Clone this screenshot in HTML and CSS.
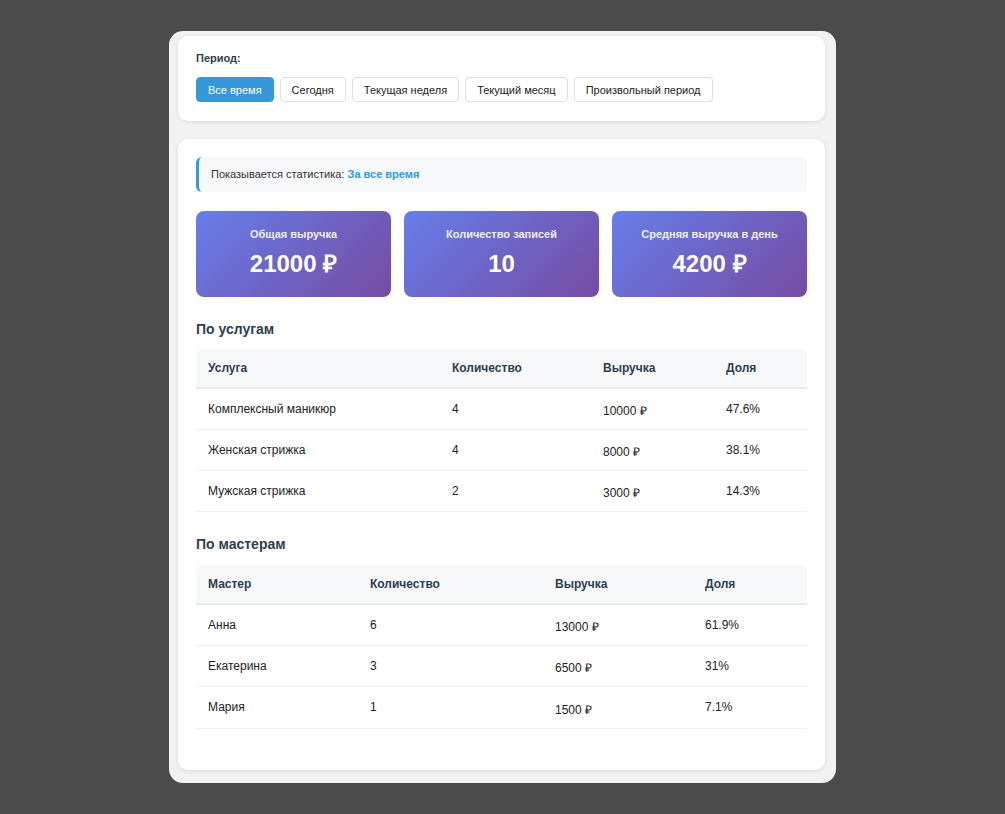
FILE: index.html
```html
<!DOCTYPE html>
<html lang="ru">
<head>
<meta charset="utf-8">
<title>Статистика</title>
<link rel="stylesheet" href="styles.css">
</head>
<body>
<div class="frame">
  <section class="card period-card">
    <div class="period-label">Период:</div>
    <div class="period-buttons">
      <button class="pbtn active">Все время</button>
      <button class="pbtn">Сегодня</button>
      <button class="pbtn">Текущая неделя</button>
      <button class="pbtn">Текущий месяц</button>
      <button class="pbtn">Произвольный период</button>
    </div>
  </section>
  <section class="card stats-card">
    <div class="info">Показывается статистика: <strong class="info-hl">За все время</strong></div>
    <div class="stats">
      <div class="stat">
        <div class="stat-label">Общая выручка</div>
        <div class="stat-value">21000 ₽</div>
      </div>
      <div class="stat">
        <div class="stat-label">Количество записей</div>
        <div class="stat-value">10</div>
      </div>
      <div class="stat">
        <div class="stat-label">Средняя выручка в день</div>
        <div class="stat-value">4200 ₽</div>
      </div>
    </div>

    <h3 class="section-title">По услугам</h3>
    <table class="tbl tbl-services">
      <thead>
        <tr><th class="c1">Услуга</th><th class="c2">Количество</th><th class="c3">Выручка</th><th class="c4">Доля</th></tr>
      </thead>
      <tbody>
        <tr><td>Комплексный маникюр</td><td>4</td><td><span class="money">10000 ₽</span></td><td>47.6%</td></tr>
        <tr><td>Женская стрижка</td><td>4</td><td><span class="money">8000 ₽</span></td><td>38.1%</td></tr>
        <tr><td>Мужская стрижка</td><td>2</td><td><span class="money">3000 ₽</span></td><td>14.3%</td></tr>
      </tbody>
    </table>

    <h3 class="section-title">По мастерам</h3>
    <table class="tbl tbl-masters">
      <thead>
        <tr><th class="c1">Мастер</th><th class="c2">Количество</th><th class="c3">Выручка</th><th class="c4">Доля</th></tr>
      </thead>
      <tbody>
        <tr><td>Анна</td><td>6</td><td><span class="money">13000 ₽</span></td><td>61.9%</td></tr>
        <tr><td>Екатерина</td><td>3</td><td><span class="money">6500 ₽</span></td><td>31%</td></tr>
        <tr><td>Мария</td><td>1</td><td><span class="money">1500 ₽</span></td><td>7.1%</td></tr>
      </tbody>
    </table>
  </section>
</div>
</body>
</html>
```
FILE: styles.css
```css
* { box-sizing: border-box; }
html, body { margin: 0; padding: 0; }
body {
  background: #4b4b4b;
  font-family: "Liberation Sans", Arial, sans-serif;
  color: #222;
  padding-top: 31px;
  min-height: 814px;
}
.frame {
  width: 667px;
  margin: 0 0 0 169px;
  height: 752px;
  background: #f2f2f2;
  border-radius: 14px;
  padding: 5px 11px 13px 9px;
  display: flex;
  flex-direction: column;
  gap: 18px;
}
.card {
  background: #fff;
  border-radius: 10px;
  box-shadow: 0 1px 5px rgba(0,0,0,0.10);
  padding: 18px;
}
.period-card { height: 85px; padding-top: 16px; }
.period-label {
  font-size: 11px;
  font-weight: bold;
  color: #2c3e50;
  line-height: 13px;
  margin-bottom: 12px;
}
.period-buttons { display: flex; gap: 6px; }
.pbtn {
  font-family: "Liberation Sans", Arial, sans-serif;
  font-size: 11px;
  height: 25px;
  padding: 0 11px;
  border: 1px solid #dcdfe3;
  background: #fff;
  color: #222;
  border-radius: 4px;
}
.pbtn.active { background: #3498db; border-color: #3498db; color: #fff; }

.stats-card { flex: 1; }
.info {
  height: 35px;
  background: #f6f8fa;
  border-left: 3px solid #3498db;
  border-radius: 6px;
  padding: 0 12px;
  font-size: 11px;
  line-height: 35px;
  color: #333;
}
.info-hl { color: #3498db; }
.stats {
  display: grid;
  grid-template-columns: repeat(3, 1fr);
  gap: 13px;
  margin-top: 19px;
}
.stat {
  height: 86px;
  border-radius: 8px;
  background: linear-gradient(135deg, #667eea 0%, #764ba2 100%);
  color: #fff;
  text-align: center;
  padding-top: 17px;
}
.stat-label { font-size: 11px; font-weight: bold; opacity: 0.9; line-height: 13px; }
.stat-value { font-size: 24px; font-weight: bold; line-height: 28px; margin-top: 9px; }

.section-title {
  font-size: 14px;
  font-weight: bold;
  color: #2c3e50;
  margin: 24px 0 12px;
  line-height: 16px;
}
.tbl-masters { margin-top: 13px; }
.tbl {
  width: 100%;
  border-collapse: collapse;
  font-size: 12px;
  table-layout: fixed;
}
.tbl th {
  background: #f7f8fa;
  text-align: left;
  font-weight: bold;
  color: #2c3e50;
  height: 39px;
  padding: 0 12px;
  border-bottom: 2px solid #e9ecef;
}
.tbl thead tr th:first-child { border-top-left-radius: 6px; }
.tbl thead tr th:last-child { border-top-right-radius: 6px; }
.tbl td {
  height: 41px;
  padding: 0 12px;
  border-bottom: 1px solid #f0f0f0;
  color: #222;
}
.tbl-masters td { height: 41.5px; }
.money { position: relative; top: 2px; }
.tbl-services .c1 { width: 244px; }
.tbl-services .c2 { width: 151px; }
.tbl-services .c3 { width: 123px; }
.tbl-services .c4 { width: 93px; }
.tbl-masters .c1 { width: 162px; }
.tbl-masters .c2 { width: 185px; }
.tbl-masters .c3 { width: 150px; }
.tbl-masters .c4 { width: 114px; }
```
